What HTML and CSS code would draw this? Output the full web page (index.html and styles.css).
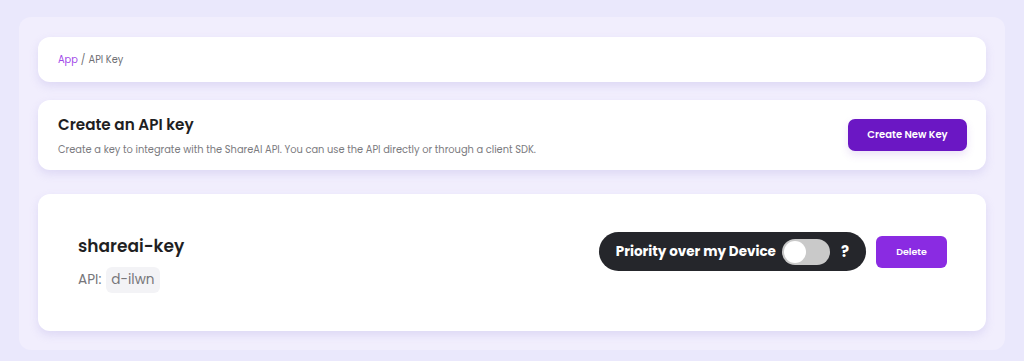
FILE: index.html
```html
<!DOCTYPE html>
<html lang="en">
<head>
    <meta charset="UTF-8">
    <meta name="viewport" content="width=device-width, initial-scale=1.0">
    <title>API Key</title>
    <link rel="stylesheet" href="styles.css">
</head>
<body>
    <div class="page">
        <div class="card breadcrumb">
            <a href="#" class="crumb-link">App</a>
            <span class="crumb-sep">/</span>
            <span class="crumb-current">API Key</span>
        </div>

        <div class="card create-card">
            <div class="create-text">
                <h2>Create an API key</h2>
                <p>Create a key to integrate with the ShareAI API. You can use the API directly or through a client SDK.</p>
            </div>
            <button class="btn-create">Create New Key</button>
        </div>

        <div class="card key-card">
            <div class="key-info">
                <h3>shareai-key</h3>
                <div class="key-api">API: <span class="key-code">d-ilwn</span></div>
            </div>
            <div class="key-actions">
                <div class="priority">
                    <span class="priority-label">Priority over my Device</span>
                    <span class="switch"><span class="knob"></span></span>
                    <span class="help">?</span>
                </div>
                <button class="btn-delete">Delete</button>
            </div>
        </div>
    </div>
</body>
</html>
```

FILE: styles.css
```css
body {
    font-family: 'Poppins', 'Inter', 'Noto Sans', sans-serif;
    margin: 0;
    padding: 17px 19px 11px;
    background-color: #eae8fc;
}

.page {
    background-color: #f1eefd;
    border-radius: 12px;
    padding: 20px 19px 19px;
    display: flex;
    flex-direction: column;
}

.card {
    background-color: #fff;
    border-radius: 12px;
    box-shadow: 0 4px 8px rgba(180, 170, 230, 0.3);
}

.breadcrumb {
    height: 45px;
    box-sizing: border-box;
    padding: 0 20px;
    display: flex;
    align-items: center;
    gap: 3px;
    font-size: 9.8px;
    margin-bottom: 18px;
}

.crumb-link {
    color: #a046e8;
    text-decoration: none;
}

.crumb-sep,
.crumb-current {
    color: #6f6f73;
}

.create-card {
    height: 70px;
    box-sizing: border-box;
    padding: 0 19px 0 20px;
    display: flex;
    align-items: center;
    justify-content: space-between;
    margin-bottom: 24px;
}

.create-text h2 {
    margin: 0 0 7px;
    font-size: 15.2px;
    font-weight: 600;
    color: #1f1f23;
}

.create-text p {
    margin: 0;
    font-size: 9.85px;
    color: #7a7a7e;
}

.btn-create {
    background-color: #6b17c4;
    color: #fff;
    border: none;
    border-radius: 7px;
    width: 119px;
    height: 32px;
    font-family: inherit;
    font-size: 10px;
    font-weight: 600;
    box-shadow: 0 4px 8px rgba(120, 60, 200, 0.15);
    cursor: pointer;
}

.key-card {
    height: 137px;
    box-sizing: border-box;
    padding: 0 39px 0 40px;
    display: flex;
    align-items: center;
    justify-content: space-between;
}

.key-info h3 {
    margin: 0 0 8px;
    font-size: 17px;
    font-weight: 600;
    color: #1f1f23;
}

.key-api {
    font-size: 13.6px;
    color: #77777b;
    display: flex;
    align-items: center;
    gap: 5px;
}

.key-code {
    background-color: #f3f3f6;
    border-radius: 6px;
    padding: 3px 5px;
}

.key-actions {
    display: flex;
    align-items: center;
    gap: 10px;
    margin-top: -22px;
}

.priority {
    background-color: #25262b;
    border-radius: 20px;
    height: 39px;
    box-sizing: border-box;
    padding: 0 17px 0 17px;
    display: flex;
    align-items: center;
    gap: 6px;
}

.priority-label {
    color: #fff;
    font-size: 13.5px;
    font-weight: 700;
}

.switch {
    width: 48px;
    height: 26px;
    border-radius: 13px;
    background-color: #c9c9c9;
    display: flex;
    align-items: center;
    padding: 0 2px;
    box-sizing: border-box;
}

.knob {
    width: 22px;
    height: 22px;
    border-radius: 50%;
    background-color: #fff;
}

.help {
    color: #fff;
    font-size: 15px;
    font-weight: 700;
    margin-left: 5px;
}

.btn-delete {
    background-color: #8a2be2;
    color: #fff;
    border: none;
    border-radius: 6px;
    width: 71px;
    height: 32px;
    font-family: inherit;
    font-size: 9.5px;
    font-weight: 600;
    cursor: pointer;
}
```
